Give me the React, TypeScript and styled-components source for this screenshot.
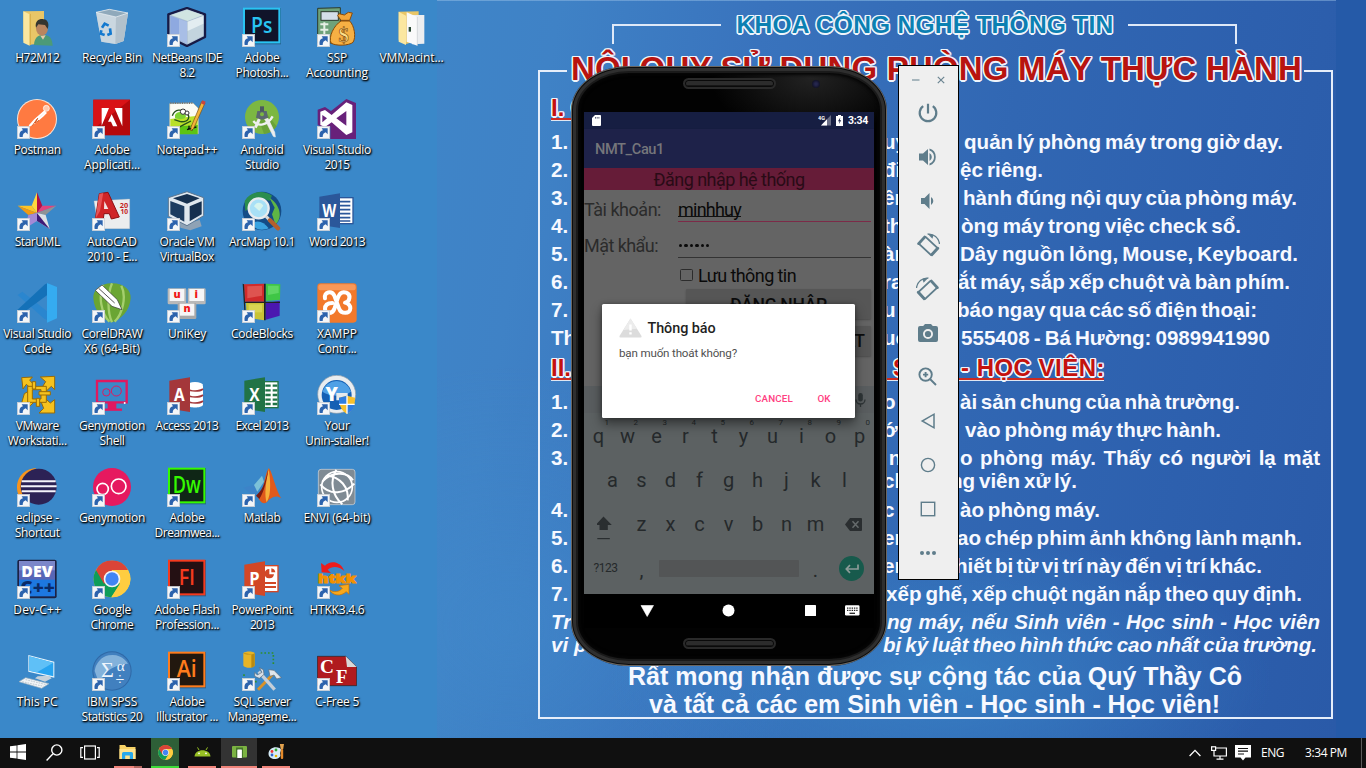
import React, { useLayoutEffect, useRef, useState } from "react";
import styled, { createGlobalStyle, css } from "styled-components";

const Global = createGlobalStyle`
  * { box-sizing: border-box; }
  html, body { margin: 0; padding: 0; overflow: hidden; background: #101010; }
  svg { display: block; }
`;

/* ---------- text that is spaced out to a given width ---------- */

const FitSpan = styled.span`
  display: inline-block;
  white-space: pre;
`;

type FitProps = { w: number; by?: "letter" | "word"; children: string };

function Fit({ w, by = "letter", children }: FitProps) {
  const ref = useRef<HTMLSpanElement>(null);
  const [space, setSpace] = useState(0);
  useLayoutEffect(() => {
    const natural = ref.current!.getBoundingClientRect().width;
    const spaces = children.split(" ").length - 1;
    const count = by === "word" && spaces > 0 ? spaces : Math.max(children.length, 1);
    setSpace((w - natural) / count);
  }, [w, by, children]);
  const useWords = by === "word" && children.includes(" ");
  return (
    <FitSpan ref={ref} style={useWords ? { wordSpacing: space } : { letterSpacing: space }}>
      {children}
    </FitSpan>
  );
}

/* ---------- page ---------- */

const Screen = styled.div`
  position: relative;
  width: 1366px;
  height: 768px;
  display: flex;
  flex-direction: column;
  overflow: hidden;
`;

const Desktop = styled.main`
  display: flex;
  height: 738px;
  background: linear-gradient(90deg, #3a88c9 0 1000px, #255aa8 1000px);
`;

const IconArea = styled.section`
  position: relative;
  z-index: 1;
  width: 437px;
  height: 738px;
  flex: none;
  display: grid;
  grid-template-columns: 74.5px repeat(4, 75px) 74px;
  grid-auto-rows: 92px;
  padding-top: 7px;
`;

/* ---------- wallpaper poster ---------- */

const Poster = styled.section`
  width: 899px;
  height: 738px;
  flex: none;
  padding-left: 101px;
  border-top: 1px solid rgba(160, 200, 235, 0.45);
  color: #f7f9ff;
  font-family: "Liberation Sans", Arial, sans-serif;
  font-weight: 700;
  background:
    radial-gradient(ellipse 330px 150px at 56% 92%, rgba(58, 134, 200, 0.75), transparent),
    radial-gradient(ellipse 300px 260px at 8% 85%, rgba(66, 140, 205, 0.5), transparent),
    linear-gradient(100deg, #3f85c8 0%, #3f82c6 12%, #3973bd 32%, #3167b3 58%, #2d60ae 80%, #2a5aa8 100%);
`;

const PosterHead = styled.div`
  height: 49px;
  width: 772px;
  display: flex;
  justify-content: center;
  padding-top: 8px;
  gap: 16px;
`;

const Bracket = styled.div<{ $side: "left" | "right" }>`
  width: 109px;
  height: 20px;
  margin-top: 15px;
  border-top: 2px solid #dfe9f8;
  ${(p) => (p.$side === "left" ? "border-left: 2px solid #dfe9f8;" : "border-right: 2px solid #dfe9f8;")}
`;

const outlined = css`
  text-shadow:
    1.5px 0 #eef4fb, -1.5px 0 #eef4fb, 0 1.5px #eef4fb, 0 -1.5px #eef4fb,
    1.2px 1.2px #eef4fb, -1.2px 1.2px #eef4fb, 1.2px -1.2px #eef4fb, -1.2px -1.2px #eef4fb;
`;

const Faculty = styled.h2`
  ${outlined}
  margin: 0;
  width: 375px;
  font-size: 24.5px;
  line-height: 31px;
  color: #0b80b2;
`;

const TitleRow = styled.div`
  height: 40px;
  width: 795px;
  display: flex;
  align-items: flex-end;
  gap: 4px;
`;

const TitleEdge = styled.div<{ $side: "left" | "right" }>`
  flex: 1;
  height: 20px;
  border-top: 2px solid #e6eefa;
  ${(p) => (p.$side === "left" ? "border-left: 2px solid #e6eefa;" : "border-right: 2px solid #e6eefa;")}
`;

const Title = styled.h1`
  ${outlined}
  margin: 0;
  width: 729px;
  height: 40px;
  font-size: 33px;
  line-height: 37px;
  color: #b81410;
`;

const PosterBody = styled.div`
  width: 795px;
  height: 629px;
  border: solid #e6eefa;
  border-width: 0 2px 2px;
  padding: 4px 0 0 11px;
`;

const Rule = styled.div<{ $h: number; $italic?: boolean }>`
  display: grid;
  grid-template-columns: 332px auto;
  height: ${(p) => p.$h}px;
  font-size: 20.6px;
  line-height: 28px;
  white-space: pre;
  font-style: ${(p) => (p.$italic ? "italic" : "normal")};
`;

const RuleRest = styled.div`
  display: flex;
`;

const Fragment = styled.span<{ $w: number }>`
  width: ${(p) => p.$w}px;
  flex: none;
`;

const RedHeading = styled.h3`
  margin: 0;
  height: 34px;
  font-size: 24px;
  line-height: 27px;
  color: #c4120e;
  white-space: pre;
`;

const Underlined = styled.div<{ $w: number }>`
  ${outlined}
  display: flex;
  width: ${(p) => p.$w}px;
  height: 26px;
  border-bottom: 2px solid #cc2a20;
  box-shadow: 0 1px 0 #dfe6f2;
`;

const Closing = styled.p<{ $indent: number }>`
  margin: 0;
  padding-left: ${(p) => p.$indent}px;
  height: 28px;
  font-size: 25px;
  line-height: 28px;
  white-space: pre;
`;

/* lead, fragment beside the phone, x of tail, end of tail, tail, row height */
type RuleData = [string, string, number, number, string, number];

const teacherRules: RuleData[] = [
  ["1.", "uy", 964, 1283, "quản lý phòng máy trong giờ dạy.", 28],
  ["2.", "đi", 960, 1043, "ệc riêng.", 28],
  ["3.", "ên", 963, 1297, "hành đúng nội quy của phòng máy.", 28],
  ["4.", "th", 961, 1241, "òng máy trong việc check sổ.", 28],
  ["5.", "àn", 960, 1298, "Dây nguồn lỏng, Mouse, Keyboard.", 28],
  ["6.", "ra", 958, 1290, "ắt máy, sắp xếp chuột và bàn phím.", 28],
  ["7.", "u", 957, 1257, "báo ngay qua các số điện thoại:", 28],
  ["Th", "uc", 961, 1270, "555408 - Bá Hường: 0989941990", 30],
];

const studentRules: RuleData[] = [
  ["1.", "o", 960, 1240, "ài sản chung của nhà trường.", 28],
  ["2.", "ớ", 965, 1221, "vào phòng máy thực hành.", 28],
  ["3.", " n", 960, 1320, "o phòng máy. Thấy có người lạ mặt", 23],
  ["", "ch", 950, 1077, "ng viên xử lý.", 29],
  ["4.", "c u", 960, 1100, "ào phòng máy.", 28],
  ["5.", "en", 957, 1302, "ao chép phim ảnh không lành mạnh.", 28],
  ["6.", "en", 955, 1262, "hiết bị từ vị trí này đến vị trí khác.", 28],
  ["7.", "", 886, 1302, "xếp ghế, xếp chuột ngăn nắp theo quy định.", 28],
];

function RuleLine({ data, italic }: { data: RuleData; italic?: boolean }) {
  const [lead, frag, from, to, tail, h] = data;
  return (
    <Rule $h={h} $italic={italic}>
      <span>{lead}</span>
      <RuleRest>
        <Fragment $w={from - 883}>{frag}</Fragment>
        <Fit w={to - from} by="word">{tail}</Fit>
      </RuleRest>
    </Rule>
  );
}

/* ---------- desktop icons ---------- */

const Shortcut = styled.figure`
  margin: 0;
  display: flex;
  flex-direction: column;
  align-items: center;
  height: 92px;
`;

const Caption = styled.figcaption`
  display: flex;
  flex-direction: column;
  align-items: center;
  margin-top: 3px;
  color: #fff;
  font: 12px/15px "Open Sans", "Noto Sans", sans-serif;
  text-shadow: 1px 1px 2px #000, 0 1px 2px rgba(0, 0, 0, 0.85), 1px 1px 1px rgba(0, 0, 0, 0.6);
`;

const sans = "Open Sans, sans-serif";

function AdobeTile({ c, bg, t, size, tw }: { c: string; bg: string; t: string; size: number; tw: number }) {
  return (
    <g>
      <rect x="3" y="3" width="114" height="109" fill="rgba(0,0,0,.3)" />
      <rect x="6" y="5" width="106" height="101" fill={bg} stroke={c} strokeWidth="6" />
      <text x="59" y="77" fontSize={size} fontWeight="600" fontFamily={sans} fill={c} textAnchor="middle" textLength={tw} lengthAdjust="spacingAndGlyphs">{t}</text>
    </g>
  );
}

function OfficeBook({ c, t, children }: { c: string; t: string; children: React.ReactNode }) {
  return (
    <g>
      <rect x="62" y="20" width="46" height="78" fill="#fff" stroke={c} strokeWidth="4" />
      {children}
      <path d="M7 17 69 7V111L7 101Z" fill={c} />
      <text x="37" y="77" fontSize="52" fontWeight="700" fontFamily={sans} fill="#fff" textAnchor="middle" textLength={t === "W" ? 42 : 31} lengthAdjust="spacingAndGlyphs">{t}</text>
    </g>
  );
}

function ChromeLogo() {
  return (
    <g>
      <circle cx="60" cy="60" r="55" fill="#fdd03b" />
      <path d="M12 33A55 55 0 0 0 58 115L84 74 60 60Z" fill="#0f9d58" />
      <path d="M108 33A55 55 0 0 1 58 115L84 74 60 33Z" fill="#ffcd40" />
      <path d="M12 33 36 74 60 60V33H108A55 55 0 0 0 12 33Z" fill="#db4437" />
      <circle cx="60" cy="60" r="25" fill="#f4f4f4" />
      <circle cx="60" cy="60" r="20" fill="#4285f4" />
    </g>
  );
}

const art: Record<string, React.ReactNode> = {
  user: (
    <g>
      <path d="M19 13 81 12V107L35 114 19 100Z" fill="#e9c667" />
      <path d="M19 13 38 22V116L19 107Z" fill="#fbe7a0" />
      <path d="M38 22 42 20V112L38 116Z" fill="#d9b04c" />
      <path d="M51 114C52 92 64 82 78 84 95 82 106 92 107 116Z" fill="#4c9a78" />
      <path d="M70 86 78 98 86 85Z" fill="#e6c9a8" />
      <ellipse cx="75" cy="64" rx="18" ry="22" fill="#b98560" />
      <path d="M57 62C52 40 70 34 80 37 94 38 97 54 92 66L84 54 64 52Z" fill="#35352f" />
    </g>
  ),
  bin: (
    <g>
      <path d="M12 16 52 7 108 18 95 102 70 111 28 104Z" fill="#c6d3dd" fillOpacity=".85" />
      <path d="M12 16 72 30 108 18 95 102 70 111 28 104Z" fill="#d5dde3" fillOpacity=".7" />
      <path d="M72 30 108 18 95 102 70 111Z" fill="#aebdc8" fillOpacity=".85" />
      <path d="M12 16 52 7 108 18 72 30Z" fill="#8fa9bb" stroke="#eef3f6" strokeWidth="2" />
      <g fill="none" stroke="#1379cf" strokeWidth="8">
        <path d="M30 62 38 50 50 56" />
        <path d="M54 64 56 80 46 84" />
        <path d="M38 84 26 80 28 70" />
      </g>
    </g>
  ),
  netbeans: (
    <g>
      <path d="M60 3 114 22V90L60 117 4 90V22Z" fill="#a9bdd2" stroke="#171a45" strokeWidth="7" strokeLinejoin="round" />
      <path d="M60 8 108 24 62 42 12 24Z" fill="#d0e5e2" />
      <path d="M10 26 60 44V110L10 86Z" fill="#8ea9e0" />
      <path d="M36 36 60 44V110L36 98Z" fill="#a8bee6" />
      <path d="M62 44 109 27V86L62 110Z" fill="#c3d4de" />
      <path d="M62 44 109 27V50L62 72Z" fill="#e3edf1" />
    </g>
  ),
  ps: <AdobeTile c="#29c4f3" bg="#10142a" t="Ps" size={63} tw={64} />,
  ssp: (
    <g stroke="#2b3a2c" strokeWidth="3">
      <path d="M2 4 70 2V108H2Z" fill="#6fa27a" />
      <rect x="12" y="14" width="52" height="26" fill="#d5dfe8" />
      <path d="M10 52H34M10 68H34M10 84H34M22 46V92" stroke="#e6efe6" strokeWidth="6" />
      <path d="M66 20 82 24 94 16 106 18 98 40H72L62 26Z" fill="#f2a63a" stroke="#8a4a06" />
      <path d="M72 42H98C112 56 118 90 108 106 96 116 56 118 42 108 34 90 50 56 72 42Z" fill="#f6b044" stroke="#8a4a06" />
      <text x="80" y="104" fontSize="62" fontFamily="Liberation Serif, serif" fontWeight="700" fill="#fbe08a" stroke="#8a4a06" strokeWidth="2" textAnchor="middle">$</text>
    </g>
  ),
  folder: (
    <g>
      <path d="M20 14 80 13V100L40 112 20 98Z" fill="#e9c667" />
      <path d="M60 24 97 24V110L60 112Z" fill="#eceef0" />
      <path d="M44 16 76 30V116L44 104Z" fill="#fafafa" />
      <path d="M76 30V116" stroke="#c9ccd0" strokeWidth="2" />
      <path d="M20 14 42 26V114L20 104Z" fill="#fbe7a0" />
      <rect x="50" y="60" width="7" height="14" fill="#2c4a35" />
    </g>
  ),
  postman: (
    <g>
      <circle cx="60" cy="60" r="60" fill="#fbe3d4" />
      <circle cx="60" cy="60" r="57" fill="#ff7a41" />
      <circle cx="88" cy="28" r="9" fill="#ffc9b0" stroke="#fff" strokeWidth="2" />
      <path d="M84 36 54 62 38 80 52 72 76 52 88 40" fill="#ffe7dc" stroke="#fff" strokeWidth="5" strokeLinejoin="round" />
      <path d="M46 80 62 58 54 72 66 64" fill="none" stroke="#d95a22" strokeWidth="3" />
    </g>
  ),
  adobe: (
    <g>
      <rect x="4" y="2" width="110" height="107" fill="#b5090c" />
      <path d="M4 2H114L4 90Z" fill="#d91216" />
      <path d="M29 27H51L29 80ZM68 27H91V82Z" fill="#fff" />
      <path d="M59 46 76 82H63L57 68H48Z" fill="#fff" />
    </g>
  ),
  npp: (
    <g>
      <path d="M8 14 78 12 94 28V104H8Z" fill="#fbfbf4" stroke="#b7b79c" strokeWidth="2" />
      <path d="M10 60 92 50V104H10Z" fill="#b9e02a" />
      <path d="M10 84 92 78V106H10Z" fill="#5cc314" />
      <path d="M10 12H76" stroke="#777" strokeWidth="6" strokeDasharray="3 4" />
      <path d="M16 50C24 30 44 28 58 44 70 50 68 70 40 68L22 62M34 86 52 76 72 66" fill="none" stroke="#24501a" strokeWidth="4" />
      <path d="M24 48C30 36 46 36 56 48 60 58 46 64 24 58Z" fill="#7ed332" />
      <circle cx="48" cy="38" r="8" fill="#fff" stroke="#333" strokeWidth="3" />
      <circle cx="60" cy="42" r="6" fill="#fff" stroke="#333" strokeWidth="3" />
      <path d="M60 92 88 84M66 80V92M76 78V94" stroke="#111" strokeWidth="4" />
      <path d="M104 8 114 12 80 88 72 96 72 84Z" fill="#f3b43a" stroke="#7b4d10" strokeWidth="2" />
      <path d="M106 4 116 8 112 18 102 13Z" fill="#c94440" />
    </g>
  ),
  android: (
    <g>
      <circle cx="60" cy="54" r="51" fill="#7cb742" />
      <path d="M60 26 104 82A51 51 0 0 1 66 105L50 60Z" fill="#6aa338" />
      <path d="M34 66C48 84 76 80 92 52" fill="none" stroke="#f2f2f2" strokeWidth="7" />
      <path d="M52 60 40 86" stroke="#eee" strokeWidth="9" />
      <path d="M68 60 94 112 100 114 98 100 78 58Z" fill="#eee" stroke="#eee" strokeWidth="2" />
      <path d="M46 36H74L78 56 60 62 42 56Z" fill="#5b6770" />
      <rect x="54" y="22" width="12" height="16" fill="#4d5860" />
      <circle cx="60" cy="46" r="6" fill="#7cb742" />
    </g>
  ),
  vs: (
    <g>
      <path d="M88 0 117 12V120H40V82L28 90 2 78V32L24 24 42 36Z" fill="#68217a" />
      <path d="M88 10 106 18V100L88 108 44 70 24 84 10 78V38L24 33 44 48Z" fill="#fff" />
      <path d="M16 48 30 58 16 70ZM58 58 88 36V80Z" fill="#68217a" />
    </g>
  ),
  star: (
    <g>
      <path d="M60 4 44 44 60 66Z" fill="#ffd83e" />
      <path d="M60 4 76 44 60 66Z" fill="#b20e45" />
      <path d="M2 44H44L60 66Z" fill="#ffc526" />
      <path d="M2 44 34 72 60 66Z" fill="#f09a12" />
      <path d="M118 44H76L60 66Z" fill="#e1447c" />
      <path d="M118 44 86 72 60 66Z" fill="#8f9296" />
      <path d="M34 72 22 114 60 90V66Z" fill="#a489d6" />
      <path d="M60 66 86 72 98 114 60 90Z" fill="#dfe1e4" />
      <path d="M60 66 98 114 60 90Z" fill="#3f1b77" />
    </g>
  ),
  autocad: (
    <g>
      <path d="M6 30 113 24V113H20Z" fill="#ecedee" stroke="#bbb" strokeWidth="1" />
      <text x="96" y="50" fontSize="22" fontWeight="700" fontFamily={sans} fill="#c31f22" textAnchor="middle">20</text>
      <text x="97" y="70" fontSize="20" fontWeight="700" fontFamily={sans} fill="#c31f22" textAnchor="middle">10</text>
      <path d="M22 8 48 4 82 78 58 84 52 68H36L34 84H10Z" fill="#cf2427" stroke="#8c1013" strokeWidth="3" />
      <path d="M37 30 49 54H36Z" fill="#f3e3e3" />
      <path d="M22 8 34 6 24 60 10 84Z" fill="#e65356" />
    </g>
  ),
  vbox: (
    <g>
      <path d="M38 92 60 100 98 86 104 106 70 118 40 110Z" fill="#8fa2b5" />
      <path d="M60 2 110 20V74L60 104 4 76V20Z" fill="#dfe7ee" stroke="#5d7690" strokeWidth="3" strokeLinejoin="round" />
      <path d="M60 9 98 22 60 38 18 22Z" fill="#16304f" />
      <path d="M10 30 52 46V92L10 70Z" fill="#1d3c60" />
      <path d="M68 46 104 31V70L68 91Z" fill="#16304f" />
    </g>
  ),
  arcmap: (
    <g>
      <circle cx="60" cy="60" r="58" fill="#144c86" />
      <path d="M8 30C24 2 64 -6 90 14L82 30 60 20 40 40 10 60Z" fill="#2b8d4d" />
      <path d="M82 20C114 40 124 80 100 100L90 70 98 50Z" fill="#5fb545" />
      <path d="M30 96C50 86 66 94 80 112 56 122 36 114 30 96Z" fill="#3aa3e0" />
      <circle cx="50" cy="52" r="30" fill="#a8e0f6" stroke="#e8ecef" strokeWidth="7" />
      <path d="M36 46C44 30 58 34 64 44L52 60Z" fill="#d5f4ee" />
      <path d="M72 76 84 88" stroke="#d9d9d9" strokeWidth="9" />
      <path d="M84 88 108 112" stroke="#b45f2c" strokeWidth="13" strokeLinecap="round" />
    </g>
  ),
  word: (
    <OfficeBook c="#2b579a" t="W">
      <path d="M66 32H100M66 44H100M66 56H100M66 68H100M66 80H100M66 90H100" stroke="#2b579a" strokeWidth="5" />
    </OfficeBook>
  ),
  vscode: (
    <g>
      <path d="M2 36 16 26 92 86V112L80 106Z" fill="#2a86cf" />
      <path d="M0 82 84 4 94 0V34L14 92Z" fill="#1471b8" />
      <path d="M90 0 120 12V106L90 119Z" fill="#35abf0" />
    </g>
  ),
  corel: (
    <g>
      <path d="M60 1C98 1 118 24 116 46 114 84 84 112 60 118 34 112 6 84 4 46 2 24 24 1 60 1Z" fill="#6aa533" />
      <path d="M60 1C46 34 46 88 60 118M34 6C18 40 28 90 52 116M88 8C104 40 92 92 68 116" fill="none" stroke="#a5cf6d" strokeWidth="7" />
      <path d="M10 22 30 6 76 50 90 80 60 70Z" fill="#fff" stroke="#333" strokeWidth="2" />
      <path d="M20 16 68 60" stroke="#555" strokeWidth="3" />
    </g>
  ),
  unikey: (
    <g fontFamily={sans} fontSize="32" fontWeight="800" textAnchor="middle">
      <rect x="2" y="16" width="56" height="48" rx="4" fill="#b9b9b9" />
      <rect x="8" y="18" width="44" height="36" fill="#f6f6f6" />
      <rect x="62" y="16" width="54" height="48" rx="4" fill="#b9b9b9" />
      <rect x="67" y="18" width="44" height="36" fill="#f6f6f6" />
      <rect x="32" y="60" width="56" height="48" rx="4" fill="#a9a9a9" />
      <rect x="38" y="62" width="44" height="36" fill="#f6f6f6" />
      <g fill="#f01818">
        <text x="30" y="45">u</text>
        <text x="88" y="45">i</text>
        <text x="60" y="87">n</text>
      </g>
    </g>
  ),
  blocks: (
    <g>
      <path d="M6 4 66 2V56H8Z" fill="#d02b2b" />
      <path d="M16 10 60 8V38L16 46Z" fill="#de5450" />
      <path d="M71 2 115 4 114 50 71 54Z" fill="#3fc646" />
      <path d="M78 8 110 8V30L78 36Z" fill="#5fd663" />
      <path d="M12 60H66V112L14 104Z" fill="#c8c335" />
      <path d="M20 64H60V88H20Z" fill="#d8d452" />
      <path d="M71 60 113 54V98L71 110Z" fill="#4b17b0" />
      <path d="M2 2 6 4 12 108 8 100ZM66 2H71V112H66ZM8 56H114V60H8Z" fill="#222" />
    </g>
  ),
  xampp: (
    <g>
      <rect x="1" y="1" width="118" height="118" rx="10" fill="#f2792b" />
      <rect x="4" y="4" width="112" height="18" rx="8" fill="#f9a56d" opacity=".7" />
      <path d="M24 46C20 26 44 22 52 38L66 76C72 94 100 94 100 76 100 64 92 61 84 59 100 56 102 34 88 29 72 24 66 34 62 46L52 78C46 94 24 94 24 78 24 66 32 60 46 60" fill="none" stroke="#fff" strokeWidth="12" strokeLinecap="round" strokeLinejoin="round" />
    </g>
  ),
  vmware: (
    <g fill="#f6c21e" stroke="#9a6b05" strokeWidth="3" strokeLinejoin="round">
      <path d="M14 8 46 6 38 16 54 32 44 42 28 28 18 42Z" />
      <path d="M70 6 113 4V44L103 34 88 48 76 36 86 20Z" />
      <path d="M72 80 82 68 100 84 113 74V114H66L80 100Z" />
      <path d="M22 56 36 48 52 80 40 92 28 104 14 84Z" />
      <path d="M32 34H88V82H32ZM46 44V72H72V44Z" fillRule="evenodd" />
      <path d="M46 20H56V42H46ZM66 50H100V60H66ZM58 70H68V94H58Z" />
    </g>
  ),
  genyshell: (
    <g fill="none" stroke="#e0195f">
      <path d="M15 18H104V82H15Z" strokeWidth="7" />
      <path d="M60 82V104" strokeWidth="26" />
      <path d="M30 104H90" strokeWidth="7" />
      <circle cx="43" cy="52" r="11" strokeWidth="3" />
      <circle cx="73" cy="48" r="15" strokeWidth="3" />
      <circle cx="98" cy="84" r="3" fill="#fff" stroke="none" />
    </g>
  ),
  access: (
    <g>
      <ellipse cx="84" cy="30" rx="24" ry="9" fill="#fff" />
      <path d="M60 32H108V90C104 100 64 100 60 90Z" fill="#fff" />
      <path d="M62 42C70 50 98 50 108 42M62 60C70 68 98 68 108 60M62 78C70 86 98 86 108 78" fill="none" stroke="#a4373a" strokeWidth="5" />
      <path d="M7 17 69 7V111L7 101Z" fill="#a4373a" />
      <text x="37" y="78" fontSize="52" fontWeight="700" fontFamily={sans} fill="#fff" textAnchor="middle" textLength="32" lengthAdjust="spacingAndGlyphs">A</text>
    </g>
  ),
  excel: (
    <OfficeBook c="#217346" t="X">
      <path d="M70 32H86M92 32H106M70 46H86M92 46H106M70 60H86M92 60H106M70 74H86M92 74H106M70 87H86M92 87H106" stroke="#217346" strokeWidth="7" />
    </OfficeBook>
  ),
  your: (
    <g>
      <circle cx="59" cy="58" r="57" fill="#e9edf0" stroke="#8b98a4" strokeWidth="2" />
      <circle cx="59" cy="60" r="45" fill="#1560b4" />
      <path d="M16 50A45 45 0 0 1 102 50C80 66 40 66 16 50Z" fill="#4fa0e6" />
      <text x="44" y="77" fontSize="56" fontWeight="800" fontFamily={sans} fill="#fff" textAnchor="middle">Y</text>
      <path d="M58 54H92V66H74V76H58Z" fill="#e5e9ec" />
      <path d="M90 62 114 68C114 92 108 108 90 116 74 108 66 92 66 68Z" fill="#f7c02c" />
      <path d="M90 62V88H66L66 68ZM90 88H113C110 104 102 112 90 116Z" fill="#2e7de0" />
      <path d="M90 62V116M66 88H113" stroke="#fff" strokeWidth="4" />
    </g>
  ),
  eclipse: (
    <g>
      <path d="M58 4C20 4 0 34 0 62 0 86 16 106 36 112 14 86 16 28 58 4Z" fill="#f7941e" />
      <circle cx="65" cy="59" r="54" fill="#2c2255" />
      <path d="M14 43H116M12 58H119M14 73H116" stroke="#f4f4fb" strokeWidth="6" />
    </g>
  ),
  geny: (
    <g>
      <circle cx="60" cy="60" r="57" fill="#e6195f" />
      <circle cx="32" cy="66" r="17" fill="none" stroke="#fff" strokeWidth="5" />
      <circle cx="80" cy="58" r="22" fill="none" stroke="#fff" strokeWidth="5" />
    </g>
  ),
  dw: <AdobeTile c="#35fa00" bg="#0f2616" t="Dw" size={70} tw={84} />,
  matlab: (
    <g>
      <path d="M4 62 36 54 56 30 66 44 40 82 24 78Z" fill="#3d83c8" />
      <path d="M36 54 60 26 66 44 46 74Z" fill="#7cc1d8" />
      <path d="M80 4C90 10 98 62 118 94 100 80 84 94 74 106 66 112 58 108 50 96 66 70 68 20 80 4Z" fill="#e05a1c" />
      <path d="M80 4C84 34 90 80 74 106 70 96 66 70 80 4Z" fill="#f7b13b" />
      <path d="M80 4C72 30 68 66 42 86L52 96C66 76 74 40 80 4Z" fill="#7c1c12" />
    </g>
  ),
  envi: (
    <g fill="none" stroke="#fff" strokeWidth="7">
      <rect x="4" y="7" width="110" height="106" rx="8" fill="#7f8b94" stroke="#d5dade" strokeWidth="2" />
      <circle cx="60" cy="60" r="46" strokeWidth="5" />
      <path d="M10 52C40 88 84 80 112 50M30 26C70 30 96 60 92 100M58 8C38 40 44 84 76 112M16 44C50 6 96 20 108 40" strokeWidth="6" />
    </g>
  ),
  dev: (
    <g>
      <rect x="1" y="2" width="118" height="116" rx="6" fill="#1c2244" />
      <rect x="6" y="6" width="108" height="60" fill="#5866b6" />
      <rect x="6" y="6" width="108" height="28" fill="#9aa2da" opacity=".55" />
      <rect x="6" y="62" width="108" height="50" fill="#1d78e0" />
      <text x="60" y="54" fontSize="46" fontWeight="800" fontFamily={sans} fill="#fff" textAnchor="middle" textLength="94" lengthAdjust="spacingAndGlyphs">DEV</text>
      <text x="62" y="104" fontSize="52" fontWeight="800" fontFamily={sans} fill="#0a2a66" textAnchor="middle" textLength="104" lengthAdjust="spacingAndGlyphs">C++</text>
    </g>
  ),
  chrome: <ChromeLogo />,
  fl: <AdobeTile c="#f53a1e" bg="#241013" t="Fl" size={66} tw={48} />,
  ppt: (
    <OfficeBook c="#d24726" t="P">
      <path d="M82 30A14 14 0 1 0 96 46H82Z" fill="#d24726" />
      <path d="M88 28A14 14 0 0 1 100 40H88Z" fill="#d24726" />
      <path d="M68 72H102M68 84H102" stroke="#d24726" strokeWidth="6" />
    </OfficeBook>
  ),
  htkk: (
    <g>
      <path d="M12 12 14 40 42 42 32 32C46 20 66 22 82 36 70 4 38 4 24 20Z" fill="#ec1c1c" />
      <text x="60" y="73" fontSize="38" fontWeight="800" fontFamily={sans} fill="#f29100" stroke="#f29100" strokeWidth="3" textAnchor="middle" textLength="114" lengthAdjust="spacingAndGlyphs">htkk</text>
      <path d="M96 76V106L88 98C70 114 48 110 36 92 52 102 68 98 76 88L66 80Z" fill="#f7a81c" stroke="#c46e00" strokeWidth="2" />
    </g>
  ),
  pc: (
    <g>
      <path d="M34 12 112 32V80L34 62Z" fill="#e8f4fb" />
      <path d="M37 16 109 35V76L37 59Z" fill="#28a4f0" />
      <path d="M37 16 109 35 60 64 37 59Z" fill="#5fc0f7" />
      <path d="M62 76 96 74 104 82 84 92 54 82Z" fill="#c7d2da" />
      <path d="M6 92 26 80 96 98 74 112Z" fill="#f1f4f6" stroke="#9fb0bd" strokeWidth="2" />
      <path d="M16 92 80 106M26 86 88 101" stroke="#a8b5bf" strokeWidth="2" strokeDasharray="5 3" />
    </g>
  ),
  spss: (
    <g fontFamily="Liberation Serif, serif" fill="#eef5fc">
      <circle cx="60" cy="60" r="59" fill="#2f68a6" />
      <circle cx="60" cy="60" r="56" fill="#4180bf" />
      <path d="M8 60A54 54 0 0 1 108 38C70 40 30 60 24 104Z" fill="#a7cdea" opacity=".65" />
      <text x="46" y="78" fontSize="66" textAnchor="middle">Σ</text>
      <text x="86" y="60" fontSize="46" textAnchor="middle">α</text>
      <text x="84" y="102" fontSize="48" textAnchor="middle">÷</text>
    </g>
  ),
  ai: <AdobeTile c="#ff7c1c" bg="#22180f" t="Ai" size={68} tw={60} />,
  sql: (
    <g>
      <path d="M56 6H94V44M6 70V92H50" fill="none" stroke="#2f8f2d" strokeWidth="5" strokeDasharray="5 6" />
      <path d="M4 6C12 0 32 0 38 6V44C30 52 12 52 4 44Z" fill="#e6b427" />
      <path d="M4 6C10 12 32 12 38 6V44C34 48 28 50 28 50V10Z" fill="#b98a12" />
      <path d="M48 116 96 66" stroke="#d8922a" strokeWidth="9" />
      <path d="M50 62 98 116" stroke="#c4ced8" strokeWidth="10" />
      <path d="M38 64 46 72 60 64 52 50 64 56 66 70 52 82 38 76Z" fill="#d8e0e8" stroke="#5c6b79" strokeWidth="2" />
      <path d="M80 56 96 58 118 80 104 84 96 72 84 76Z" fill="#dfe6ec" stroke="#5c6b79" strokeWidth="2" />
    </g>
  ),
  cfree: (
    <g fontFamily="Liberation Serif, serif" fontWeight="700" fill="#fff" textAnchor="middle">
      <path d="M1 16H86L119 48V104H1Z" fill="#b01a1e" stroke="#222" strokeWidth="2" />
      <path d="M86 16 119 48H90Z" fill="#d8d8d8" />
      <text x="30" y="66" fontSize="58">C</text>
      <text x="74" y="97" fontSize="56">F</text>
    </g>
  ),
};

type Item = { c: number; r: number; a: string; t: [string, number][]; plain?: boolean };

const items: Item[] = [
  { c: 1, r: 1, a: "user", t: [["H72M12", 44]], plain: true },
  { c: 2, r: 1, a: "bin", t: [["Recycle Bin", 60]], plain: true },
  { c: 3, r: 1, a: "netbeans", t: [["NetBeans IDE", 70], ["8.2", 15]] },
  { c: 4, r: 1, a: "ps", t: [["Adobe", 35], ["Photosh...", 53]] },
  { c: 5, r: 1, a: "ssp", t: [["SSP", 20], ["Accounting", 62]] },
  { c: 6, r: 1, a: "folder", t: [["VMMacint...", 64]], plain: true },
  { c: 1, r: 2, a: "postman", t: [["Postman", 47]] },
  { c: 2, r: 2, a: "adobe", t: [["Adobe", 35], ["Applicati...", 56]] },
  { c: 3, r: 2, a: "npp", t: [["Notepad++", 61]] },
  { c: 4, r: 2, a: "android", t: [["Android", 43], ["Studio", 34]] },
  { c: 5, r: 2, a: "vs", t: [["Visual Studio", 68], ["2015", 25]] },
  { c: 1, r: 3, a: "star", t: [["StarUML", 45]] },
  { c: 2, r: 3, a: "autocad", t: [["AutoCAD", 50], ["2010 - E...", 50]] },
  { c: 3, r: 3, a: "vbox", t: [["Oracle VM", 55], ["VirtualBox", 54]] },
  { c: 4, r: 3, a: "arcmap", t: [["ArcMap 10.1", 66]] },
  { c: 5, r: 3, a: "word", t: [["Word 2013", 56]] },
  { c: 1, r: 4, a: "vscode", t: [["Visual Studio", 68], ["Code", 28]] },
  { c: 2, r: 4, a: "corel", t: [["CorelDRAW", 61], ["X6 (64-Bit)", 56]] },
  { c: 3, r: 4, a: "unikey", t: [["UniKey", 38]] },
  { c: 4, r: 4, a: "blocks", t: [["CodeBlocks", 62]] },
  { c: 5, r: 4, a: "xampp", t: [["XAMPP", 40], ["Contr...", 39]] },
  { c: 1, r: 5, a: "vmware", t: [["VMware", 43], ["Workstati...", 59]] },
  { c: 2, r: 5, a: "genyshell", t: [["Genymotion", 66], ["Shell", 25]] },
  { c: 3, r: 5, a: "access", t: [["Access 2013", 63]] },
  { c: 4, r: 5, a: "excel", t: [["Excel 2013", 53]] },
  { c: 5, r: 5, a: "your", t: [["Your", 25], ["Unin-staller!", 64]] },
  { c: 1, r: 6, a: "eclipse", t: [["eclipse -", 43], ["Shortcut", 45]] },
  { c: 2, r: 6, a: "geny", t: [["Genymotion", 66]] },
  { c: 3, r: 6, a: "dw", t: [["Adobe", 35], ["Dreamwea...", 65]] },
  { c: 4, r: 6, a: "matlab", t: [["Matlab", 37]] },
  { c: 5, r: 6, a: "envi", t: [["ENVI (64-bit)", 67]] },
  { c: 1, r: 7, a: "dev", t: [["Dev-C++", 48]] },
  { c: 2, r: 7, a: "chrome", t: [["Google", 38], ["Chrome", 43]] },
  { c: 3, r: 7, a: "fl", t: [["Adobe Flash", 65], ["Profession...", 64]] },
  { c: 4, r: 7, a: "ppt", t: [["PowerPoint", 61], ["2013", 24]] },
  { c: 5, r: 7, a: "htkk", t: [["HTKK3.4.6", 55]] },
  { c: 1, r: 8, a: "pc", t: [["This PC", 41]], plain: true },
  { c: 2, r: 8, a: "spss", t: [["IBM SPSS", 50], ["Statistics 20", 61]] },
  { c: 3, r: 8, a: "ai", t: [["Adobe", 35], ["Illustrator ...", 62]] },
  { c: 4, r: 8, a: "sql", t: [["SQL Server", 57], ["Manageme...", 69]] },
  { c: 5, r: 8, a: "cfree", t: [["C-Free 5", 44]] },
];

const GridCell = styled.div<{ $c: number; $r: number }>`
  grid-column: ${(p) => p.$c};
  grid-row: ${(p) => p.$r};
`;

function DesktopIcon({ item }: { item: Item }) {
  return (
    <GridCell $c={item.c} $r={item.r}>
      <Shortcut>
        <svg width="40" height="40" viewBox="0 0 120 120">
          {art[item.a]}
          {!item.plain && (
            <g>
              <rect x="1" y="82" width="37" height="37" fill="#f4f6f8" stroke="#c9cdd2" strokeWidth="2" />
              <path d="M8 114C6 102 10 96 18 94L14 88H32V106L26 100C20 102 17 106 17 114Z" fill="#2c63ad" />
            </g>
          )}
        </svg>
        <Caption>
          {item.t.map(([text, w]) => (
            <Fit key={text} w={w}>{text}</Fit>
          ))}
        </Caption>
      </Shortcut>
    </GridCell>
  );
}

/* ---------- phone ---------- */

const PhoneWindow = styled.section`
  position: absolute;
  left: 571px;
  top: 66px;
  width: 315.5px;
  height: 600px;
  padding: 46px 12px 0 13px;
  border-radius: 58px / 44px;
  background:
    radial-gradient(ellipse 100px 60px at 76% 2%, rgba(60, 60, 60, 0.55), transparent),
    #020202;
  box-shadow:
    inset 0 0 0 1px #6a6661,
    inset 0 0 0 2px #0c0c0c,
    inset 0 0 0 5px #2f2f2f,
    inset 0 0 0 7px #1a1a1a,
    inset 0 0 3px 9px #060606;
  font-family: Roboto, sans-serif;
`;

const Speaker = styled.div<{ $top: number }>`
  position: absolute;
  left: 112px;
  top: ${(p) => p.$top}px;
  width: 93px;
  height: 11px;
  border-radius: 6px;
  background: #161616;
  border: 2px solid #2a2a2a;
  box-shadow: inset 0 0 0 1px #0a0a0a, inset 0 4px 0 1px #2c2c2c;
`;

const Camera = styled.div`
  position: absolute;
  left: 241px;
  top: 14px;
  width: 8px;
  height: 8px;
  border-radius: 50%;
  background: radial-gradient(#25264d 20%, #15162e 60%, #0c0c14);
`;

const Display = styled.div`
  position: relative;
  width: 290px;
  height: 516px;
  display: flex;
  flex-direction: column;
  background: #646464;
`;

const StatusBar = styled.div`
  height: 17px;
  background: #161e42;
  display: flex;
  align-items: center;
  color: #fff;
  font-size: 10.5px;
  font-weight: 700;
  padding: 0 6px 0 8px;
`;

const StatusRight = styled.div`
  margin-left: auto;
  display: flex;
  align-items: center;
  gap: 5px;
`;

const AppBar = styled.div`
  height: 39px;
  flex: none;
  background: #1e2249;
  color: #75767b;
  font-size: 14.6px;
  font-weight: 500;
  line-height: 40px;
  padding-left: 11px;
  box-shadow: 0 1px 2px rgba(0, 0, 0, 0.35);
`;

const Banner = styled.div`
  height: 22px;
  flex: none;
  background: #661c38;
  color: #290b16;
  font-size: 18px;
  line-height: 24px;
  text-align: center;
`;

const Field = styled.div<{ $h: number }>`
  display: flex;
  height: ${(p) => p.$h}px;
  font-size: 18px;
  color: #2b2b2b;
`;

const FieldLabel = styled.label`
  width: 94px;
  line-height: 39px;
  white-space: nowrap;
`;

const FieldInput = styled.div<{ $line: string }>`
  width: 193px;
  height: 32px;
  line-height: 39px;
  color: #0a0a0a;
  border-bottom: 1px solid ${(p) => p.$line};
`;

const Composing = styled.span`
  display: inline-block;
  height: 27px;
  border-bottom: 1px solid #111;
`;

const Dots = styled.div`
  display: flex;
  gap: 2px;
  padding: 18px 0 0 1px;
`;

const Dot = styled.i`
  width: 3.4px;
  height: 3.4px;
  border-radius: 50%;
  background: #0a0a0a;
`;

const CheckRow = styled.div`
  display: flex;
  height: 26px;
  margin-left: 96px;
  padding-bottom: 2px;
  align-items: center;
  gap: 5.5px;
  font-size: 18px;
  color: #0a0a0a;
`;

const CheckBox = styled.i`
  width: 12.5px;
  height: 12.5px;
  border: 1.5px solid #2c2c2c;
  border-radius: 1.5px;
`;

const GreyButton = styled.div<{ $mb: number }>`
  width: 185px;
  height: 30px;
  margin: 0 0 ${(p) => p.$mb}px 102px;
  background: #565656;
  border-radius: 1px;
  box-shadow: 0 1px 2px rgba(0, 0, 0, 0.25);
  color: #0c0c0c;
  font-size: 17.5px;
  font-weight: 500;
  line-height: 33px;
  text-align: center;
`;

const ButtonEnd = styled.div`
  text-align: right;
  line-height: 31px;
  padding-right: 6px;
`;

const Keyboard = styled.div`
  height: 208px;
  margin-top: auto;
  flex: none;
  background: #5c6162;
  color: #25292b;
`;

const Suggestions = styled.div`
  height: 27px;
  background: #595d5f;
  display: flex;
  justify-content: flex-end;
  padding: 6px 7px 0 0;
`;

const KeyRow = styled.div<{ $h: number; $pad: number }>`
  display: flex;
  height: ${(p) => p.$h}px;
  padding-left: ${(p) => p.$pad}px;
`;

const Key = styled.div`
  position: relative;
  width: 29px;
  flex: none;
  text-align: center;
  font-size: 20px;
  line-height: 46px;
`;

const Hint = styled.sup`
  position: absolute;
  right: 4px;
  top: 5px;
  font-size: 8px;
  line-height: 9px;
`;

const SideKey = styled.div<{ $w: number; $pt: number }>`
  width: ${(p) => p.$w}px;
  flex: none;
  padding-top: ${(p) => p.$pt}px;
  display: flex;
  justify-content: center;
  font-size: 12px;
  line-height: 14px;
`;

const SpaceKey = styled.div`
  width: 140px;
  height: 17px;
  margin: 13px 2px 0 3px;
  border-radius: 1px;
  background: #535556;
`;

const Enter = styled.div`
  width: 25px;
  height: 25px;
  margin: 9px 0 0 9px;
  border-radius: 50%;
  background: #175a4c;
  display: flex;
  align-items: center;
  justify-content: center;
`;

const NavBar = styled.div`
  height: 34px;
  flex: none;
  background: #000;
`;

const Dialog = styled.div`
  position: absolute;
  left: 18px;
  top: 192px;
  width: 253px;
  height: 114px;
  padding: 13px 17px 0;
  border-radius: 1.5px;
  background: #fff;
  box-shadow: 0 6px 12px rgba(0, 0, 0, 0.45), 0 0 4px rgba(0, 0, 0, 0.3);
`;

const DialogTitle = styled.div`
  display: flex;
  align-items: center;
  gap: 5.5px;
  height: 22px;
  color: #1f1f1f;
  font-size: 14.4px;
  font-weight: 500;
`;

const DialogMessage = styled.div`
  margin-top: 6px;
  height: 16px;
  line-height: 16px;
  font-size: 11.6px;
  color: #505050;
`;

const DialogActions = styled.div`
  display: flex;
  justify-content: flex-end;
  gap: 24.5px;
  margin-top: 29px;
  padding-right: 7.5px;
  color: #ff4081;
  font-size: 9.8px;
  font-weight: 500;
  line-height: 17px;
`;

function Phone() {
  return (
    <PhoneWindow>
      <Speaker $top={12} />
      <Camera />
      <Display>
        <StatusBar>
          <svg width="9" height="11" viewBox="0 0 9 11"><path d="M3 0H8.2Q9 0 9 1V10Q9 11 8 11H1Q0 11 0 10V3Z" fill="#fff" /><path d="M3.5 2V3.6M5.2 2V3.6M6.9 2V3.6" stroke="#161e42" strokeWidth=".7" /></svg>
          <StatusRight>
            <svg width="13" height="11" viewBox="0 0 13 11"><path d="M13 0V10.5H3Z" fill="#6a6f86" /><path d="M9 4.2V10.5H3Z" fill="#fff" /><text x="0" y="4.8" fontSize="5.5" fontWeight="700" fill="#fff" fontFamily="Roboto">4G</text></svg>
            <svg width="7" height="11" viewBox="0 0 7 11"><path d="M2 0H5V1H7V11H0V1H2Z" fill="#fff" /><path d="M4.3 2.6 2 6.2H3.5L2.9 9 5.2 5.3H3.8Z" fill="#161e42" /></svg>
            <Fit w={20}>3:34</Fit>
          </StatusRight>
        </StatusBar>
        <AppBar><Fit w={69}>NMT_Cau1</Fit></AppBar>
        <Banner><Fit w={151}>Đăng nhập hệ thống</Fit></Banner>
        <Field $h={36}>
          <FieldLabel><Fit w={77}>Tài khoản:</Fit></FieldLabel>
          <FieldInput $line="#7c2b48"><Composing><Fit w={63}>minhhuy</Fit></Composing></FieldInput>
        </Field>
        <Field $h={37}>
          <FieldLabel><Fit w={74}>Mật khẩu:</Fit></FieldLabel>
          <FieldInput $line="#333"><Dots><Dot /><Dot /><Dot /><Dot /><Dot /><Dot /></Dots></FieldInput>
        </Field>
        <CheckRow><CheckBox /><Fit w={98}>Lưu thông tin</Fit></CheckRow>
        <GreyButton $mb={7}><Fit w={97}>ĐĂNG NHẬP</Fit></GreyButton>
        <GreyButton $mb={0}><ButtonEnd>THOÁT</ButtonEnd></GreyButton>
        <Keyboard>
          <Suggestions>
            <svg width="13" height="16" viewBox="0 0 13 16" fill="none" stroke="#2e3436" strokeWidth="1.3"><rect x="4.2" y="1" width="4.6" height="8.5" rx="2.3" fill="#2e3436" stroke="none" /><path d="M2 7.5A4.5 4.5 0 0 0 11 7.5M6.5 12V15" /></svg>
          </Suggestions>
          <KeyRow $h={44} $pad={0}>
            {"qwertyuiop".split("").map((k, i) => (
              <Key key={k}>{k}<Hint>{(i + 1) % 10}</Hint></Key>
            ))}
          </KeyRow>
          <KeyRow $h={44} $pad={14}>
            {"asdfghjkl".split("").map((k) => <Key key={k}>{k}</Key>)}
          </KeyRow>
          <KeyRow $h={46} $pad={0}>
            <SideKey $w={43} $pt={15}>
              <svg width="17" height="24" viewBox="1 0 17 24" fill="#2a2e30"><path d="M7.5.5 15.8 9H11.8V14H3.5V9H-.5Z" /><rect x="1.3" y="22" width="12.5" height="1.2" /></svg>
            </SideKey>
            {"zxcvbnm".split("").map((k) => <Key key={k}>{k}</Key>)}
            <SideKey $w={46} $pt={17}>
              <svg width="17" height="13" viewBox="0 0 17 13"><path d="M5 0H16Q17 0 17 1V12Q17 13 16 13H5L0 6.5Z" fill="#2a2e30" /><path d="M7.5 3.3 13.5 9.7M13.5 3.3 7.5 9.7" stroke="#666b6c" strokeWidth="1.5" /></svg>
            </SideKey>
          </KeyRow>
          <KeyRow $h={47} $pad={0}>
            <SideKey $w={43} $pt={14}><Fit w={24}>?123</Fit></SideKey>
            <Key>,</Key>
            <SpaceKey />
            <Key>.</Key>
            <Enter>
              <svg width="14" height="10" viewBox="0 0 14 10" fill="none" stroke="#8d9c99" strokeWidth="1.7"><path d="M13 .5V5H1.5M5 1.2 1.3 5 5 8.8" /></svg>
            </Enter>
          </KeyRow>
        </Keyboard>
        <NavBar>
          <svg width="290" height="34" viewBox="0 0 290 34" fill="#fff">
            <path d="M57 11.5H69.5L63.2 22.5Z" stroke="#fff" strokeWidth=".6" strokeLinejoin="round" />
            <circle cx="144.5" cy="16.5" r="6" />
            <rect x="221" y="11" width="11" height="11" rx=".6" />
            <rect x="261" y="11.2" width="14.5" height="10.2" rx="1.2" />
            <path d="M263 14.2H274M263 16.4H274" stroke="#222" strokeWidth="1.3" strokeDasharray="1.4 .9" />
            <path d="M265.5 19.3H271" stroke="#222" strokeWidth="1.3" />
          </svg>
        </NavBar>
        <Dialog>
          <DialogTitle>
            <svg width="23" height="20" viewBox="0 0 23 20"><path d="M11.5.5 22.5 18Q23 19.5 21.5 19.5H1.5Q0 19.5.5 18Z" fill="#dcdcdc" /><path d="M11.5.5 18 10.8 4.5 12Z" fill="#ececec" /><path d="M11.5 6.5V12.5M11.5 14.3V16.6" stroke="#fff" strokeWidth="2.4" /></svg>
            <Fit w={68}>Thông báo</Fit>
          </DialogTitle>
          <DialogMessage><Fit w={118}>bạn muốn thoát không?</Fit></DialogMessage>
          <DialogActions><Fit w={38}>CANCEL</Fit><Fit w={13}>OK</Fit></DialogActions>
        </Dialog>
      </Display>
      <Speaker $top={572} />
    </PhoneWindow>
  );
}

/* ---------- emulator tool panel ---------- */

const Panel = styled.aside`
  position: absolute;
  left: 898px;
  top: 65px;
  width: 61px;
  height: 515px;
  border: 1px solid #000;
  background: #efefef;
  display: flex;
  flex-direction: column;
`;

const PanelTop = styled.div`
  display: flex;
  height: 25px;
  padding: 9px 13px 0 13px;
  justify-content: space-between;
`;

const Tool = styled.div`
  height: 44px;
  display: flex;
  align-items: center;
  justify-content: center;
  padding-right: 1.6px;
`;

const slate = "#5f7d8b";

const rotateArt = (
  <g>
    <rect x="3.9" y="8.1" width="16.6" height="9.6" rx=".6" transform="rotate(43 12.2 12.9)" fill="none" stroke={slate} strokeWidth="1.9" />
    <path d="M2.6 10.6 8.6 4.1M15.8 21.7 21.8 15.2" stroke={slate} strokeWidth="2.8" strokeLinecap="round" />
    <path d="M11.6 1.2C17.5.3 23 4.8 23.5 11" fill="none" stroke={slate} strokeWidth="1.3" />
    <path d="M11.6.7 17.6 2 16.4 5.8Z" fill={slate} />
  </g>
);

const tools: React.ReactNode[] = [
  <g fill="none" stroke={slate} strokeWidth="2.2"><path d="M12 2.8V12.5M7.2 5.1A8.3 8.3 0 1 0 16.8 5.1" /></g>,
  <g fill={slate}><path d="M3 8.5V15.5H7L12 20V4L7 8.5Z" /><path d="M13.5 8A4.6 4.6 0 0 1 13.5 16Z" /><path d="M13.5 3.5V5.6A6.8 6.8 0 0 1 13.5 18.4V20.5A8.9 8.9 0 0 0 13.5 3.5Z" /></g>,
  <g fill={slate}><path d="M5 9V15H8.5L13.5 20V4L8.5 9Z" /><path d="M15 8A4.6 4.6 0 0 1 15 16Z" /></g>,
  rotateArt,
  <g transform="matrix(-1 0 0 1 24 0)">{rotateArt}</g>,
  <g fill={slate}><path fillRule="evenodd" d="M9 3 7.2 5H4Q2 5 2 7V19Q2 21 4 21H20Q22 21 22 19V7Q22 5 20 5H16.8L15 3ZM12 8A5 5 0 1 1 12 18 5 5 0 0 1 12 8Z" /><circle cx="12" cy="13" r="3.1" /></g>,
  <g fill="none" stroke={slate} strokeWidth="1.9"><circle cx="9.6" cy="9.6" r="6.2" /><path d="M14 14 20 20M9.6 7V12.2M7 9.6H12.2" /></g>,
  <path d="M18 5.2V18.8L6.2 12Z" fill="none" stroke={slate} strokeWidth="1.5" />,
  <circle cx="12" cy="12" r="6.6" fill="none" stroke={slate} strokeWidth="1.4" />,
  <rect x="5.3" y="5.3" width="13.4" height="13.4" fill="none" stroke={slate} strokeWidth="1.4" />,
  <g fill={slate}><circle cx="6" cy="12" r="2" /><circle cx="12" cy="12" r="2" /><circle cx="18" cy="12" r="2" /></g>,
];

function ToolPanel() {
  return (
    <Panel>
      <PanelTop>
        <svg width="8" height="10" viewBox="0 0 8 10"><path d="M0 5H7.5" stroke="#8fa3ad" strokeWidth="1.5" /></svg>
        <svg width="8" height="10" viewBox="0 0 8 10"><path d="M.8 1.8 7.2 8.2M7.2 1.8.8 8.2" stroke="#6b8592" strokeWidth="1.2" /></svg>
      </PanelTop>
      {tools.map((t, i) => (
        <Tool key={i}><svg width="24" height="24" viewBox="0 0 24 24">{t}</svg></Tool>
      ))}
    </Panel>
  );
}

/* ---------- taskbar ---------- */

const Taskbar = styled.footer`
  height: 30px;
  background: #101010;
  display: flex;
  color: #fff;
  font: 12px/28px "Open Sans", "Noto Sans", sans-serif;
`;

const TaskItem = styled.div<{ $w: number; $ml?: number; $bg?: string; $line?: string }>`
  width: ${(p) => p.$w}px;
  margin-left: ${(p) => p.$ml || 0}px;
  height: 30px;
  display: flex;
  align-items: center;
  justify-content: center;
  background: ${(p) => p.$bg || "transparent"};
  border-bottom: 2px solid ${(p) => p.$line || "transparent"};
`;

const Tray = styled.div`
  margin-left: auto;
  display: flex;
  align-items: center;
  height: 30px;
`;

const TrayGap = styled.div<{ $ml: number }>`
  margin-left: ${(p) => p.$ml}px;
`;

const ShowDesktop = styled.div`
  width: 5px;
  height: 30px;
  margin-left: 14px;
  border-left: 1px solid #5a5a5a;
`;

function BottomBar() {
  return (
    <Taskbar>
      <TaskItem $w={36}>
        <svg width="16" height="16" viewBox="0 0 16 16" fill="#fff"><path d="M0 2.3 6.6 1.4V7.6H0ZM7.4 1.2 16 0V7.6H7.4ZM0 8.4H6.6V14.6L0 13.7ZM7.4 8.4H16V16L7.4 14.8Z" /></svg>
      </TaskItem>
      <TaskItem $w={36}>
        <svg width="17" height="17" viewBox="0 0 17 17" fill="none" stroke="#fff" strokeWidth="1.4"><circle cx="10.8" cy="6" r="5.1" /><path d="M7 9.8.6 16.4" /></svg>
      </TaskItem>
      <TaskItem $w={36}>
        <svg width="20" height="15" viewBox="0 0 20 15" fill="none" stroke="#fff" strokeWidth="1.2"><rect x="4.6" y="1" width="10.8" height="13" /><path d="M3 2.6H.8V12.4H3M17 2.6H19.2V12.4H17" /></svg>
      </TaskItem>
      <TaskItem $w={20} $ml={6} $line="#f0847a">
        <svg width="18" height="16" viewBox="0 0 18 16" overflow="visible"><g transform="translate(4 1)"><path d="M.5 0H6L7.5 2H16.5V14H.5Z" fill="#f7d266" /><path d="M.5 4H16.5V14H.5Z" fill="#ffe28c" /><path d="M3 14V8.5Q3 7 4.5 7H12.5Q14 7 14 8.5V14H10.8V10.5H6.2V14Z" fill="#28a8ea" /></g></svg>
      </TaskItem>
      <TaskItem $w={8} $line="#b3655e" />
      <TaskItem $w={28} $ml={9} $bg="#2e5f37" $line="#3fdc3a">
        <svg width="15" height="15" viewBox="4 4 112 112"><ChromeLogo /></svg>
      </TaskItem>
      <TaskItem $w={28} $ml={9} $line="#f0847a">
        <svg width="17" height="10" viewBox="0 0 17 10"><path d="M.5 9.5C.8 1 16.2 1 16.5 9.5Z" fill="#97c024" /><path d="M3.5.4 5 3M13.5.4 12 3" stroke="#97c024" /><circle cx="5" cy="6.3" r=".9" fill="#fff" /><circle cx="12" cy="6.3" r=".9" fill="#fff" /></svg>
      </TaskItem>
      <TaskItem $w={36} $ml={5} $bg="#333" $line="#f0847a">
        <svg width="15" height="13" viewBox="0 0 15 13"><rect width="15" height="11.5" rx="1" fill="#7cb342" /><path d="M4 1.5H11V12H4Z" fill="#45752a" /><rect x="5.3" y="3.5" width="4.6" height="8.5" rx=".6" fill="#fff" /></svg>
      </TaskItem>
      <TaskItem $w={28} $ml={5} $line="#f0847a">
        <svg width="16" height="16" viewBox="0 0 16 16"><path d="M.5 10C.5 4 7 2 11.5 4 15 6 11 8 12.5 11 12.5 16 1 17 .5 10Z" fill="#d5ecf7" /><circle cx="4" cy="7.5" r="1.4" fill="#e33" /><circle cx="8" cy="6" r="1.4" fill="#3a3" /><circle cx="4" cy="11" r="1.4" fill="#36c" /><circle cx="8" cy="12" r="1.3" fill="#e9b400" /><path d="M11.8 0H16L15.2 5H12.8Z" fill="#e2a24e" /><rect x="12.8" y="5" width="2.4" height="10" rx="1" fill="#e58a2a" /></svg>
      </TaskItem>
      <Tray>
        <svg width="12" height="8" viewBox="0 0 12 8" fill="none" stroke="#fff" strokeWidth="1.3"><path d="M.6 7 6 1.4 11.4 7" /></svg>
        <TrayGap $ml={10}>
          <svg width="16" height="14" viewBox="0 0 16 14" fill="none" stroke="#fff" strokeWidth="1.2"><path d="M5 2H15.4V10H3V5M9 10V13M5.5 13.2H12.5" /><rect x=".6" y=".8" width="4" height="3.6" /></svg>
        </TrayGap>
        <TrayGap $ml={8}>
          <svg width="16" height="16" viewBox="0 0 16 16"><path d="M0 0H16V12.5H10.5L8 15.5 5.5 12.5H0Z" fill="#fff" /><path d="M3 3.5H13M3 6.2H13M3 9H9" stroke="#101010" strokeWidth="1.2" /></svg>
        </TrayGap>
        <TrayGap $ml={10}><Fit w={23}>ENG</Fit></TrayGap>
        <TrayGap $ml={21}><Fit w={42}>3:34 PM</Fit></TrayGap>
        <ShowDesktop />
      </Tray>
    </Taskbar>
  );
}

export default function App() {
  return (
    <Screen>
      <Global />
      <Desktop>
        <IconArea>
          {items.map((it) => <DesktopIcon key={`${it.c}-${it.r}`} item={it} />)}
        </IconArea>
        <Poster>
          <PosterHead>
            <Bracket $side="left" />
            <Faculty><Fit w={377}>KHOA CÔNG NGHỆ THÔNG TIN</Fit></Faculty>
            <Bracket $side="right" />
          </PosterHead>
          <TitleRow>
            <TitleEdge $side="left" />
            <Title><Fit w={731}>NỘI QUY SỬ DỤNG PHÒNG MÁY THỰC HÀNH</Fit></Title>
            <TitleEdge $side="right" />
          </TitleRow>
          <PosterBody>
            <RedHeading><Underlined $w={220}>I. GIẢNG VIÊN:</Underlined></RedHeading>
            {teacherRules.map((r) => <RuleLine key={r[4]} data={r} />)}
            <RedHeading>
              <Underlined $w={553}>
                <Fragment $w={342}>II. SINH VIÊN - HỌC</Fragment>
                <Fragment $w={68}>S</Fragment>
                <Fit w={144}>- HỌC VIÊN:</Fit>
              </Underlined>
            </RedHeading>
            {studentRules.map((r) => <RuleLine key={r[4]} data={r} />)}
            <RuleLine italic data={["Tr", "", 887, 1320, "ng máy, nếu Sinh viên - Học sinh - Học viên", 23]} />
            <RuleLine italic data={["vi p", "", 883, 1317, "bị kỷ luật theo hình thức cao nhất của trường.", 31]} />
            <Closing $indent={77}><Fit w={614} by="word">Rất mong nhận được sự cộng tác của Quý Thầy Cô</Fit></Closing>
            <Closing $indent={98}><Fit w={571} by="word">và tất cả các em Sinh viên - Học sinh - Học viên!</Fit></Closing>
          </PosterBody>
        </Poster>
      </Desktop>
      <BottomBar />
      <Phone />
      <ToolPanel />
    </Screen>
  );
}
